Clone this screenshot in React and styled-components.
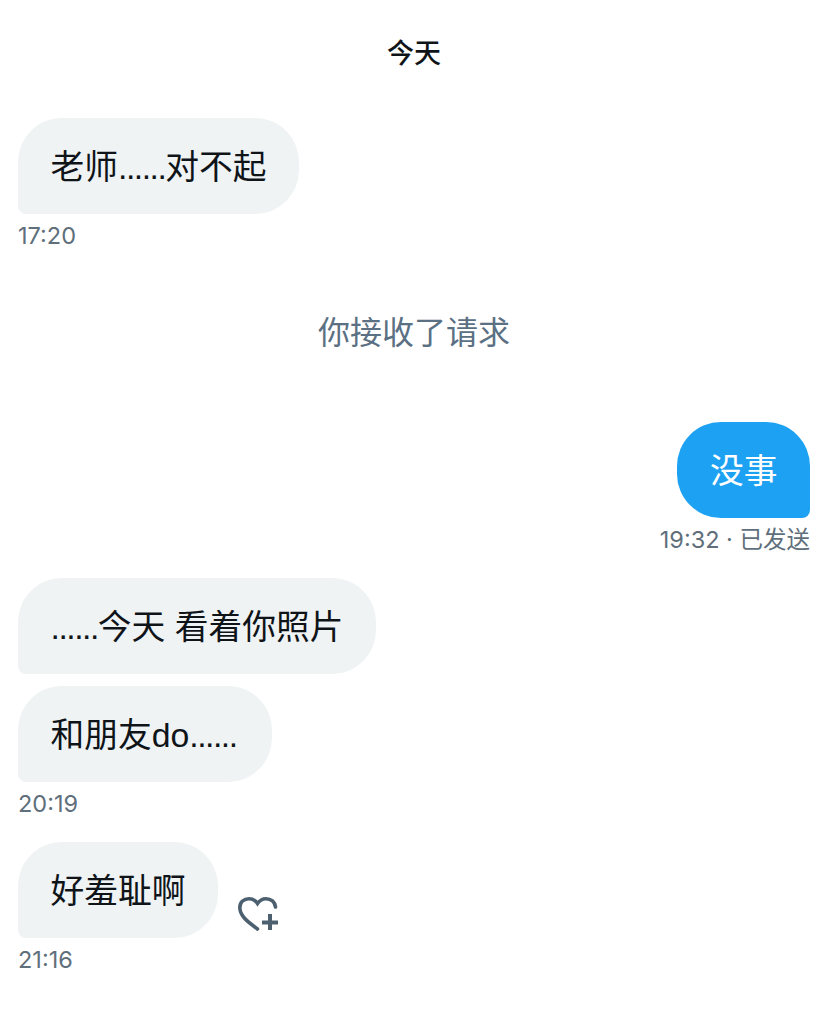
import React from 'react';
import styled, { createGlobalStyle } from 'styled-components';

const GlobalStyle = createGlobalStyle`
  html, body {
    margin: 0;
    padding: 0;
    background: #ffffff;
  }
`;

const Wrapper = styled.main`
  width: 828px;
  height: 1032px;
  box-sizing: border-box;
  padding: 32px 18px 0;
  overflow: hidden;
  display: flex;
  flex-direction: column;
  font-family: "Liberation Sans", "Noto Sans CJK SC", sans-serif;
`;

const DayTitle = styled.h1`
  margin: 0 0 54px;
  height: 32px;
  font-size: 27px;
  line-height: 44px;
  font-weight: 500;
  text-align: center;
  color: #0f1419;
`;

const Notice = styled.div`
  margin: 57px 0 64px;
  height: 50px;
  font-size: 32px;
  line-height: 50px;
  text-align: center;
  color: #5b7083;
`;

const Row = styled.div`
  display: flex;
  align-items: flex-end;
  justify-content: ${(p) => (p.$mine ? 'flex-end' : 'flex-start')};
  margin-top: ${(p) => p.$top || 0}px;
`;

const Bubble = styled.div`
  box-sizing: border-box;
  height: 96px;
  padding: 0 32.5px;
  font-size: 33.75px;
  line-height: 98px;
  white-space: nowrap;
  border-radius: ${(p) => (p.$mine ? '44px 44px 8px 44px' : '44px 44px 44px 8px')};
  background: ${(p) => (p.$mine ? '#1da1f2' : '#eff3f4')};
  color: ${(p) => (p.$mine ? '#ffffff' : '#0f1419')};
`;

const Dots = styled.span`
  letter-spacing: -1.5px;
  margin-right: ${(p) => p.$trail || 0}px;
`;

const Meta = styled.div`
  height: 30px;
  margin-top: 7px;
  font-family: Inter, "Noto Sans CJK SC", sans-serif;
  font-size: 23.5px;
  line-height: 30px;
  color: #5f6f7b;
  text-align: ${(p) => (p.$mine ? 'right' : 'left')};
`;

const LikeButton = styled.button`
  width: 42px;
  height: 42px;
  margin: 0 0 3px 19px;
  padding: 0;
  border: 0;
  background: none;
  color: #4c6070;
  display: flex;

  svg {
    width: 42px;
    height: 42px;
  }
`;

const HeartPlus = () => (
  <svg viewBox="0 0 42 42" fill="none" stroke="currentColor" aria-hidden="true">
    <path
      d="M20.5 36 C13 30 2.8 24 2.8 14.5 C2.8 9 7 5.7 12 5.7 C15.5 5.7 18.5 7.5 20.5 10.5 C22.5 7.5 25.5 5.7 29 5.7 C34 5.7 38 9 38.5 14"
      strokeWidth="3.6"
      strokeLinecap="round"
    />
    <path d="M33 21 V37 M25 29.5 H41" strokeWidth="4" />
  </svg>
);

const App = () => (
  <Wrapper>
    <GlobalStyle />
    <DayTitle>今天</DayTitle>

    <Row>
      <Bubble>老师<Dots>......</Dots>对不起</Bubble>
    </Row>
    <Meta>17:20</Meta>

    <Notice>你接收了请求</Notice>

    <Row $mine>
      <Bubble $mine>没事</Bubble>
    </Row>
    <Meta $mine>19:32 · 已发送</Meta>

    <Row $top={23}>
      <Bubble><Dots>......</Dots>今天 看着你照片</Bubble>
    </Row>
    <Row $top={12}>
      <Bubble>和朋友do<Dots $trail={3}>......</Dots></Bubble>
    </Row>
    <Meta>20:19</Meta>

    <Row $top={23}>
      <Bubble>好羞耻啊</Bubble>
      <LikeButton aria-label="喜欢">
        <HeartPlus />
      </LikeButton>
    </Row>
    <Meta>21:16</Meta>
  </Wrapper>
);

export default App;
